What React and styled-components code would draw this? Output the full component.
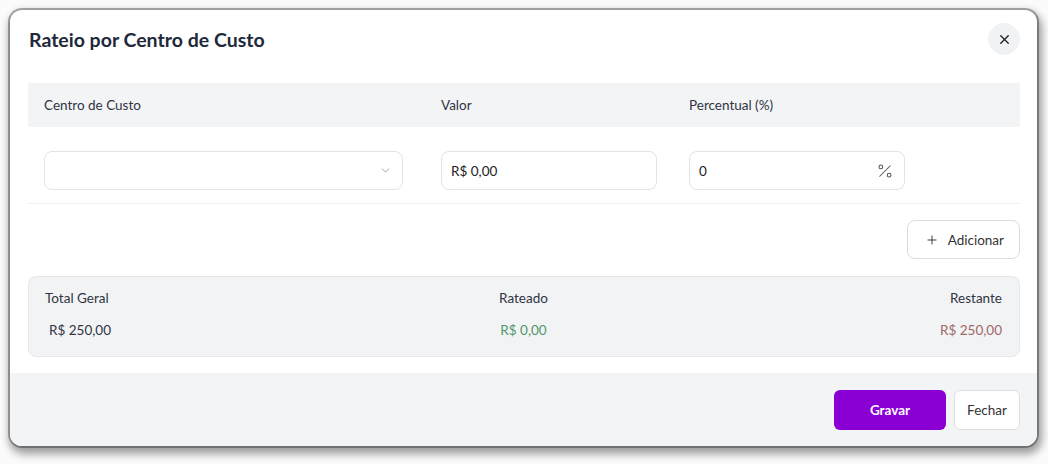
import React from "react";
import styled, { createGlobalStyle } from "styled-components";
import { X, Plus, ChevronDown, Percent } from "lucide-react";

const Global = createGlobalStyle`
  html, body {
    margin: 0;
    padding: 0;
    background: #fbfbfb;
    font-family: "Lato", "Noto Sans", sans-serif;
  }
  * { box-sizing: border-box; }
`;

const Page = styled.div`
  width: 1048px;
  height: 464px;
  padding: 10px 11px 0 10px;
  overflow: hidden;
`;

const Modal = styled.div`
  width: 1027px;
  height: 436px;
  background: #fff;
  border-radius: 12px;
  box-shadow: 0 0 0 2px rgba(0, 0, 0, 0.3), 2px 5px 8px 3px rgba(0, 0, 0, 0.38);
  display: flex;
  flex-direction: column;
  overflow: hidden;
`;

const Header = styled.div`
  height: 58px;
  padding: 0 17px 0 19px;
  display: flex;
  align-items: center;
  justify-content: space-between;
`;

const Title = styled.h2`
  margin: 0;
  font-size: 19.5px;
  font-weight: 700;
  color: #1e293b;
`;

const CloseButton = styled.button`
  width: 32px;
  height: 32px;
  border-radius: 50%;
  border: none;
  background: #f1f2f4;
  color: #222;
  display: flex;
  align-items: center;
  justify-content: center;
  padding: 0;
`;

const Body = styled.div`
  padding: 15px 17px 16px 18px;
  display: flex;
  flex-direction: column;
`;

const Row = styled.div`
  display: grid;
  grid-template-columns: 397px 248px 248px 1fr;
  align-items: center;
  ${(p) =>
    p.$head
      ? `height: 44px; background: #f3f4f6;`
      : `padding: 24px 0 13px; border-bottom: 1px solid #eeeff1;`}
`;

const Cell = styled.div`
  padding: 0 ${(p) => (p.$wide ? "22px" : "16px")} 0 16px;
  font-size: 13.5px;
  color: #2f3542;
`;

const Field = styled.div`
  height: 39px;
  border: 1px solid #e3e3e3;
  border-radius: 8px;
  background: #fff;
  display: flex;
  align-items: center;
  justify-content: space-between;
  padding: 0 ${(p) => p.$pr || "10px"} 0 9px;
  font-size: 13.5px;
  color: #222;
  svg { color: ${(p) => p.$iconColor || "#888"}; }
`;

const Actions = styled.div`
  display: flex;
  justify-content: flex-end;
  margin-top: 16px;
`;

const OutlineButton = styled.button`
  height: 39px;
  padding: 0 15px 0 17px;
  border: 1px solid #dcdcdc;
  border-radius: 8px;
  background: #fff;
  display: flex;
  align-items: center;
  gap: 9px;
  font-family: inherit;
  font-size: 13.5px;
  color: #333;
`;

const Summary = styled.div`
  margin-top: 17px;
  height: 81px;
  background: #f2f3f5;
  border: 1px solid #e6e7ea;
  border-radius: 8px;
  padding: 11px 17px 0 16px;
  display: grid;
  grid-template-columns: 1fr 1fr 1fr;
  grid-template-rows: 20px 20px;
  row-gap: 12px;
  align-items: center;
`;

const Stat = styled.div`
  font-size: 13.5px;
  color: ${(p) => p.$color || "#2f3542"};
  text-align: ${(p) => p.$align || "left"};
  padding: ${(p) => p.$pad || "0"};
`;

const Footer = styled.div`
  margin-top: auto;
  height: 73px;
  background: #f3f4f6;
  display: flex;
  justify-content: flex-end;
  align-items: center;
  gap: 8px;
  padding: 0 17px 0 0;
`;

const PrimaryButton = styled.button`
  width: 112px;
  height: 40px;
  border: none;
  border-radius: 6px;
  background: #8a00d4;
  color: #fff;
  font-family: inherit;
  font-weight: 700;
  font-size: 13.5px;
`;

const SecondaryButton = styled.button`
  width: 66px;
  height: 40px;
  border: 1px solid #dedede;
  border-radius: 6px;
  background: #fff;
  color: #333;
  font-family: inherit;
  font-size: 13.5px;
`;

export default function App() {
  return (
    <Page>
      <Global />
      <Modal>
        <Header>
          <Title>Rateio por Centro de Custo</Title>
          <CloseButton>
            <X size={15} strokeWidth={2.2} />
          </CloseButton>
        </Header>
        <Body>
          <Row $head>
            <Cell $wide>Centro de Custo</Cell>
            <Cell>Valor</Cell>
            <Cell>Percentual (%)</Cell>
            <Cell />
          </Row>
          <Row>
            <Cell $wide>
              <Field $pr="10px">
                <span />
                <ChevronDown size={13} strokeWidth={1.5} />
              </Field>
            </Cell>
            <Cell>
              <Field>R$ 0,00</Field>
            </Cell>
            <Cell>
              <Field $iconColor="#555">
                0
                <Percent size={18} strokeWidth={1.4} />
              </Field>
            </Cell>
            <Cell />
          </Row>
          <Actions>
            <OutlineButton>
              <Plus size={14} strokeWidth={1.6} />
              Adicionar
            </OutlineButton>
          </Actions>
          <Summary>
            <Stat>Total Geral</Stat>
            <Stat $align="center">Rateado</Stat>
            <Stat $align="right">Restante</Stat>
            <Stat $pad="0 0 0 4px">R$ 250,00</Stat>
            <Stat $align="center" $color="#4f9669">R$ 0,00</Stat>
            <Stat $align="right" $color="#a06868">R$ 250,00</Stat>
          </Summary>
        </Body>
        <Footer>
          <PrimaryButton>Gravar</PrimaryButton>
          <SecondaryButton>Fechar</SecondaryButton>
        </Footer>
      </Modal>
    </Page>
  );
}
